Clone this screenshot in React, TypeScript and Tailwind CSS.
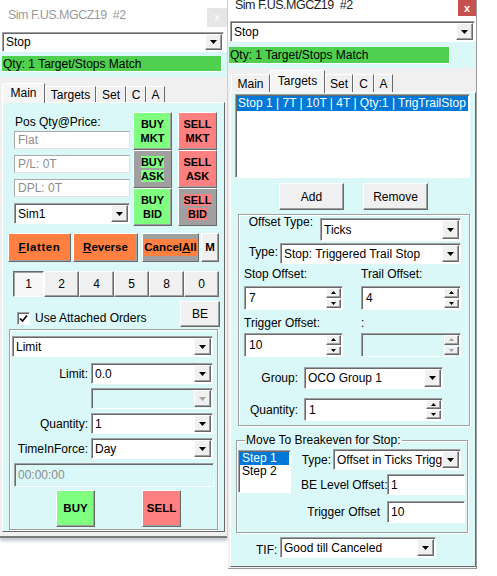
import type { ReactNode } from "react";

// classic 3D borders used by the WinForms-style controls
const RAISED =
  "border border-t-white border-l-white border-b-[#696969] border-r-[#696969] shadow-[inset_-1px_-1px_0_#a0a0a0]";
const SUNKEN =
  "border border-t-[#a0a0a0] border-l-[#a0a0a0] border-b-white border-r-white shadow-[inset_1px_1px_0_#696969]";
const LITE = "border border-t-[#a9a9a9] border-l-[#a9a9a9] border-b-[#e3e3e3] border-r-[#e3e3e3]";
const CYAN = "bg-[#dbf8f8]";
const ETCHED = "border border-[#a0a0a0] shadow-[inset_1px_1px_0_white,1px_1px_0_white]";

function Arrow({ up = false, dim = false, small = false }: { up?: boolean; dim?: boolean; small?: boolean }) {
  const w = small ? 5 : 7;
  const h = small ? 3 : 4;
  const d = up ? `M${w / 2} 0L${w} ${h}H0z` : `M0 0H${w}L${w / 2} ${h}z`;
  return (
    <svg width={w} height={h} viewBox={`0 0 ${w} ${h}`}>
      <path d={d} fill={dim ? "#a3a3a3" : "#000"} />
    </svg>
  );
}

function Combo({ value, className = "", disabled = false }: { value: string; className?: string; disabled?: boolean }) {
  return (
    <div className={`flex p-px ${SUNKEN} ${disabled ? CYAN : "bg-white"} ${className}`}>
      <span className="flex-1 flex items-center pl-[2px] whitespace-nowrap overflow-hidden">{value}</span>
      <span className={`w-[17px] shrink-0 flex items-center justify-center bg-[#f0f0f0] ${RAISED}`}>
        <Arrow dim={disabled} />
      </span>
    </div>
  );
}

function Spin({ value, className = "", disabled = false }: { value: string; className?: string; disabled?: boolean }) {
  return (
    <div className={`flex p-px ${SUNKEN} ${disabled ? CYAN : "bg-white"} ${className}`}>
      <span className="flex-1 flex items-center pl-[3px]">{value}</span>
      <span className="w-[15px] shrink-0 flex flex-col gap-px">
        <span className={`flex-1 flex items-center justify-center bg-[#f0f0f0] ${RAISED}`}>
          <Arrow up small dim={disabled} />
        </span>
        <span className={`flex-1 flex items-center justify-center bg-[#f0f0f0] ${RAISED}`}>
          <Arrow small dim={disabled} />
        </span>
      </span>
    </div>
  );
}

function TextBox({ value, className = "" }: { value: string; className?: string }) {
  return <div className={`flex items-center pl-[3px] p-px bg-white ${SUNKEN} ${className}`}>{value}</div>;
}

function ReadBox({ children, className = "" }: { children: ReactNode; className?: string }) {
  return (
    <div className={`h-[18px] flex items-center pl-[3px] bg-white text-[#8c8c8c] ${LITE} ${className}`}>{children}</div>
  );
}

function Btn({ children, className = "" }: { children: ReactNode; className?: string }) {
  return <div className={`flex items-center justify-center text-center ${RAISED} ${className}`}>{children}</div>;
}

// face colour for the button, hi colour drawn behind the caption only
function TradeBtn({ top, bottom, face, hi = "" }: { top: string; bottom: string; face: string; hi?: string }) {
  return (
    <Btn className={`font-bold text-[11px] leading-[14px] ${face}`}>
      <p>
        <span className={hi}>
          {top}
          <br />
          {bottom}
        </span>
      </p>
    </Btn>
  );
}

function QtyBar({ className = "" }: { className?: string }) {
  return (
    <div className={`bg-[#4fd14f] border-r border-b border-white flex items-center pl-[1px] ${className}`}>
      Qty: 1 Target/Stops Match
    </div>
  );
}

function Tab({ label, className = "", active = false }: { label: string; className?: string; active?: boolean }) {
  return (
    <div
      className={`flex items-center justify-center border-t border-l border-white border-r border-r-[#696969] ${
        active ? "relative z-10 translate-y-[1px] bg-[#f5f5f5] pb-[2px]" : "bg-[#f0f0f0]"
      } ${className}`}
    >
      {label}
    </div>
  );
}

function LeftWindow() {
  return (
    <div className="w-[228px] shrink-0 flex flex-col border-r border-[#cfcfcf] shadow-[0_3px_3px_rgba(90,100,130,0.35)]">
      <div className="h-[30px] flex items-center justify-between pl-[8px] bg-white">
        <span className="whitespace-pre text-[12.5px] tracking-[-0.5px] text-[#9a9a9a]">Sim F.US.MGCZ19  #2</span>
        <span className="mt-[5px] w-[20px] h-[19px] bg-[#e6e6e6] text-white text-[11px] flex items-center justify-center">
          x
        </span>
      </div>
      <div className="bg-white px-[2px] pt-[2px]">
        <Combo value="Stop" className="h-[20px] w-[222px]" />
      </div>
      <div className={`${CYAN} h-[25px] pt-[4px] px-[2px]`}>
        <QtyBar className="w-[220px] h-[16px]" />
      </div>

      <div className="bg-[#f0f0f0] pt-[6px] px-[2px] pb-[4px] border-b-2 border-[#7c7c7c]">
        <div className="flex items-end h-[19px]">
          <Tab label="Main" active className="w-[43px] h-[20px]" />
          <Tab label="Targets" className="w-[51px] h-[16px]" />
          <Tab label="Set" className="w-[30px] h-[16px]" />
          <Tab label="C" className="w-[20px] h-[16px]" />
          <Tab label="A" className="w-[19px] h-[16px]" />
        </div>

        <div
          className={`h-[430px] w-[223px] ${CYAN} border border-t-white border-l-white border-b-[#696969] border-r-[#696969] flex flex-col overflow-hidden`}
        >
          {/* position readouts + market/ask/bid buttons */}
          <div className="flex mt-[9px]">
            <div className="ml-[11px] w-[116px] flex flex-col pt-[2px]">
              <span className="h-[16px] leading-[16px] pl-[1px]">Pos Qty@Price:</span>
              <ReadBox className="mt-[1px]">Flat</ReadBox>
              <ReadBox className="mt-[6px]">P/L: 0T</ReadBox>
              <ReadBox className="mt-[6px]">DPL: 0T</ReadBox>
              <Combo value="Sim1" className="mt-[6px] h-[21px]" />
            </div>
            <div className="ml-[3px] grid grid-cols-[39px_39px] gap-x-[6px] auto-rows-[38px]">
              <TradeBtn top="BUY" bottom="MKT" face="bg-[#80ff80]" />
              <TradeBtn top="SELL" bottom="MKT" face="bg-[#ff8080]" />
              <TradeBtn top="BUY" bottom="ASK" face="bg-[#a0a0a0]" hi="bg-[#80ff80]" />
              <TradeBtn top="SELL" bottom="ASK" face="bg-[#ff8080]" />
              <TradeBtn top="BUY" bottom="BID" face="bg-[#80ff80]" />
              <TradeBtn top="SELL" bottom="BID" face="bg-[#a0a0a0]" hi="bg-[#ff8080]" />
            </div>
          </div>

          <div className="flex mt-[7px] ml-[5px] h-[29px] font-bold text-[11.5px]">
            <Btn className="w-[63px] bg-[#ff8040] tracking-[0.6px]">
              <span>
                <u>F</u>latten
              </span>
            </Btn>
            <Btn className="w-[65px] ml-[2px] bg-[#ff8040]">
              <span>
                <u>R</u>everse
              </span>
            </Btn>
            <Btn className="w-[57px] ml-[4px] bg-[#a0a0a0]">
              <span className="bg-[#ff8040]">
                Cancel<u>A</u>ll
              </span>
            </Btn>
            <Btn className="w-[18px] ml-[2px] bg-[#f0f0f0]">M</Btn>
          </div>

          <div className="flex mt-[9px] ml-[10px] h-[26px]">
            <div className="w-[31px] flex items-center justify-center bg-[#f7f7f7] border border-t-[#696969] border-l-[#696969] border-b-white border-r-white shadow-[inset_1px_1px_0_#a0a0a0]">
              1
            </div>
            {["2", "4", "5", "8", "0"].map((n) => (
              <Btn key={n} className="w-[35px] bg-[#f0f0f0]">
                {n}
              </Btn>
            ))}
          </div>

          <div className="flex items-end mt-[4px] h-[26px]">
            <div className="flex items-center ml-[14px] mb-[2px] h-[14px]">
              <span className={`w-[13px] h-[13px] bg-white flex items-center justify-center ${SUNKEN}`}>
                <svg width="9" height="9" viewBox="0 0 9 9">
                  <path d="M1 4.5L3.5 7L8 1.5" stroke="#000" strokeWidth="1.7" fill="none" />
                </svg>
              </span>
              <span className="ml-[5px]">Use Attached Orders</span>
            </div>
            <Btn className="ml-auto mr-[4px] w-[40px] h-[26px] bg-[#f0f0f0]">BE</Btn>
          </div>

          {/* order entry group */}
          <div className={`mt-[2px] ml-[6px] w-[209px] h-[201px] flex flex-col ${ETCHED}`}>
            <Combo value="Limit" className="mt-[6px] ml-[2px] w-[201px] h-[21px]" />
            <div className="flex items-center mt-[6px] h-[21px]">
              <span className="w-[78px] text-right">Limit:</span>
              <Combo value="0.0" className="ml-[3px] w-[122px] h-full" />
            </div>
            <Combo value="" disabled className="mt-[4px] ml-[81px] w-[122px] h-[21px]" />
            <div className="flex items-center mt-[4px] h-[21px]">
              <span className="w-[78px] text-right">Quantity:</span>
              <Combo value="1" className="ml-[3px] w-[122px] h-full" />
            </div>
            <div className="flex items-center mt-[4px] h-[21px]">
              <span className="w-[78px] text-right">TimeInForce:</span>
              <Combo value="Day" className="ml-[3px] w-[122px] h-full" />
            </div>
            <div className={`mt-[4px] ml-[4px] w-[200px] h-[24px] flex items-center pl-[3px] p-px text-[#8c8c8c] ${CYAN} ${SUNKEN}`}>
              00:00:00
            </div>
            <div className="flex mt-[3px] h-[37px] font-bold text-[11.5px]">
              <Btn className="ml-[46px] w-[39px] bg-[#80ff80]">BUY</Btn>
              <Btn className="ml-[47px] w-[39px] bg-[#ff8080]">SELL</Btn>
            </div>
          </div>
        </div>
      </div>
    </div>
  );
}

function RightWindow() {
  return (
    <div className="w-[249px] shrink-0 flex flex-col border-r border-[#9a9a9a]">
      <div className="h-[21px] bg-white flex justify-between overflow-hidden">
        <span className="whitespace-pre pl-[7px] -mt-[3px] leading-[16px] text-[12.5px] tracking-[-0.5px] text-[#1e1e1e]">
          Sim F.US.MGCZ19  #2
        </span>
        <span className="w-[18px] h-[16px] bg-[#c75050] text-white text-[11px] font-bold flex items-center justify-center">
          x
        </span>
      </div>
      <div className="bg-white pl-[2px]">
        <Combo value="Stop" className="h-[21px] w-[245px]" />
      </div>
      <div className={`${CYAN} h-[26px] pt-[5px] pl-[1px]`}>
        <QtyBar className="w-[221px] h-[17px]" />
      </div>

      <div className="bg-[#f0f0f0] pt-[1px] pl-[2px] pb-[1px] border-b border-[#9a9a9a]">
        <div className="flex items-end h-[23px] ml-[1px]">
          <Tab label="Main" className="w-[39px] h-[18px]" />
          <Tab label="Targets" active className="w-[55px] h-[23px]" />
          <Tab label="Set" className="w-[28px] h-[18px]" />
          <Tab label="C" className="w-[21px] h-[18px]" />
          <Tab label="A" className="w-[19px] h-[18px]" />
        </div>

        <div
          className={`h-[475px] w-[246px] ${CYAN} border border-t-white border-l-white border-b-[#696969] border-r-[#696969] flex flex-col overflow-hidden`}
        >
          <div className={`mt-[1px] ml-[4px] w-[235px] h-[84px] bg-white p-px ${SUNKEN}`}>
            <div className="h-[15px] leading-[15px] pl-[1px] bg-[#0078d7] text-white whitespace-nowrap overflow-hidden">
              Stop 1 | 7T | 10T | 4T | Qty:1 | TrigTrailStop
            </div>
          </div>

          <div className="flex mt-[5px] h-[27px]">
            <Btn className="ml-[48px] w-[65px] bg-[#f0f0f0]">Add</Btn>
            <Btn className="ml-[19px] w-[65px] bg-[#f0f0f0]">Remove</Btn>
          </div>

          {/* stop / target definition */}
          <div className={`mt-[4px] ml-[7px] w-[232px] h-[212px] flex flex-col ${ETCHED}`}>
            <div className="flex items-start">
              <span className="w-[74px] text-right leading-[14px]">Offset Type:</span>
              <Combo value="Ticks" className="ml-[7px] mt-[3px] w-[141px] h-[23px]" />
            </div>
            <div className="flex items-start mt-[2px]">
              <span className="w-[39px] mt-[2px] text-right leading-[14px]">Type:</span>
              <Combo value="Stop: Triggered Trail Stop" className="ml-[2px] w-[181px] h-[21px]" />
            </div>
            <div className="flex mt-[3px] h-[14px] leading-[14px]">
              <span className="ml-[5px] w-[117px]">Stop Offset:</span>
              <span>Trail Offset:</span>
            </div>
            <div className="flex mt-[5px] h-[24px]">
              <Spin value="7" className="ml-[5px] w-[99px]" />
              <Spin value="4" className="ml-[18px] w-[100px]" />
            </div>
            <div className="flex mt-[6px] h-[14px] leading-[14px]">
              <span className="ml-[5px] w-[117px]">Trigger Offset:</span>
              <span>:</span>
            </div>
            <div className="flex mt-[3px] h-[24px]">
              <Spin value="10" className="ml-[5px] w-[99px]" />
              <Spin value="" disabled className="ml-[18px] w-[100px]" />
            </div>
            <div className="flex items-center mt-[10px] h-[22px]">
              <span className="w-[59px] text-right">Group:</span>
              <Combo value="OCO Group 1" className="ml-[6px] w-[139px] h-full" />
            </div>
            <div className="flex items-center mt-[9px] h-[23px]">
              <span className="w-[59px] text-right">Quantity:</span>
              <Spin value="1" className="ml-[6px] w-[139px] h-full" />
            </div>
          </div>

          <fieldset className={`mt-[7px] ml-[5px] w-[232px] h-[100px] p-0 m-0 ${ETCHED}`}>
            <legend className="ml-[8px] px-[1px] leading-[14px]">Move To Breakeven for Stop:</legend>
            <div className="flex">
              <div className={`mt-[3px] ml-[1px] w-[53px] h-[43px] bg-white p-px leading-[13px] ${SUNKEN}`}>
                <div className="bg-[#0078d7] text-white pl-[2px]">Step 1</div>
                <div className="pl-[2px]">Step 2</div>
              </div>
              <div className="ml-[10px] flex flex-col">
                <div className="flex items-center mt-[2px] h-[21px]">
                  <span className="w-[30px] text-right">Type:</span>
                  <Combo value="Offset in Ticks Trigger" className="ml-[2px] w-[128px] h-full" />
                </div>
                <div className="flex items-center mt-[4px] h-[21px]">
                  <span className="w-[86px] whitespace-nowrap">BE Level Offset:</span>
                  <TextBox value="1" className="w-[78px] h-full" />
                </div>
                <div className="flex items-center mt-[6px] h-[22px]">
                  <span className="w-[86px] pr-[7px] text-right whitespace-nowrap">Trigger Offset</span>
                  <TextBox value="10" className="w-[78px] h-full" />
                </div>
              </div>
            </div>
          </fieldset>

          <div className="flex items-start mt-[4px] h-[21px]">
            <span className="ml-[25px] w-[22px] mt-[6px] leading-[14px]">TIF:</span>
            <Combo value="Good till Canceled" className="ml-[2px] w-[156px] h-full" />
          </div>
        </div>
      </div>
    </div>
  );
}

export default function App() {
  return (
    <div className="w-[497px] h-[576px] bg-white flex items-start overflow-hidden font-['Liberation_Sans',Arial,sans-serif] text-[12px] text-black">
      <LeftWindow />
      <RightWindow />
    </div>
  );
}
